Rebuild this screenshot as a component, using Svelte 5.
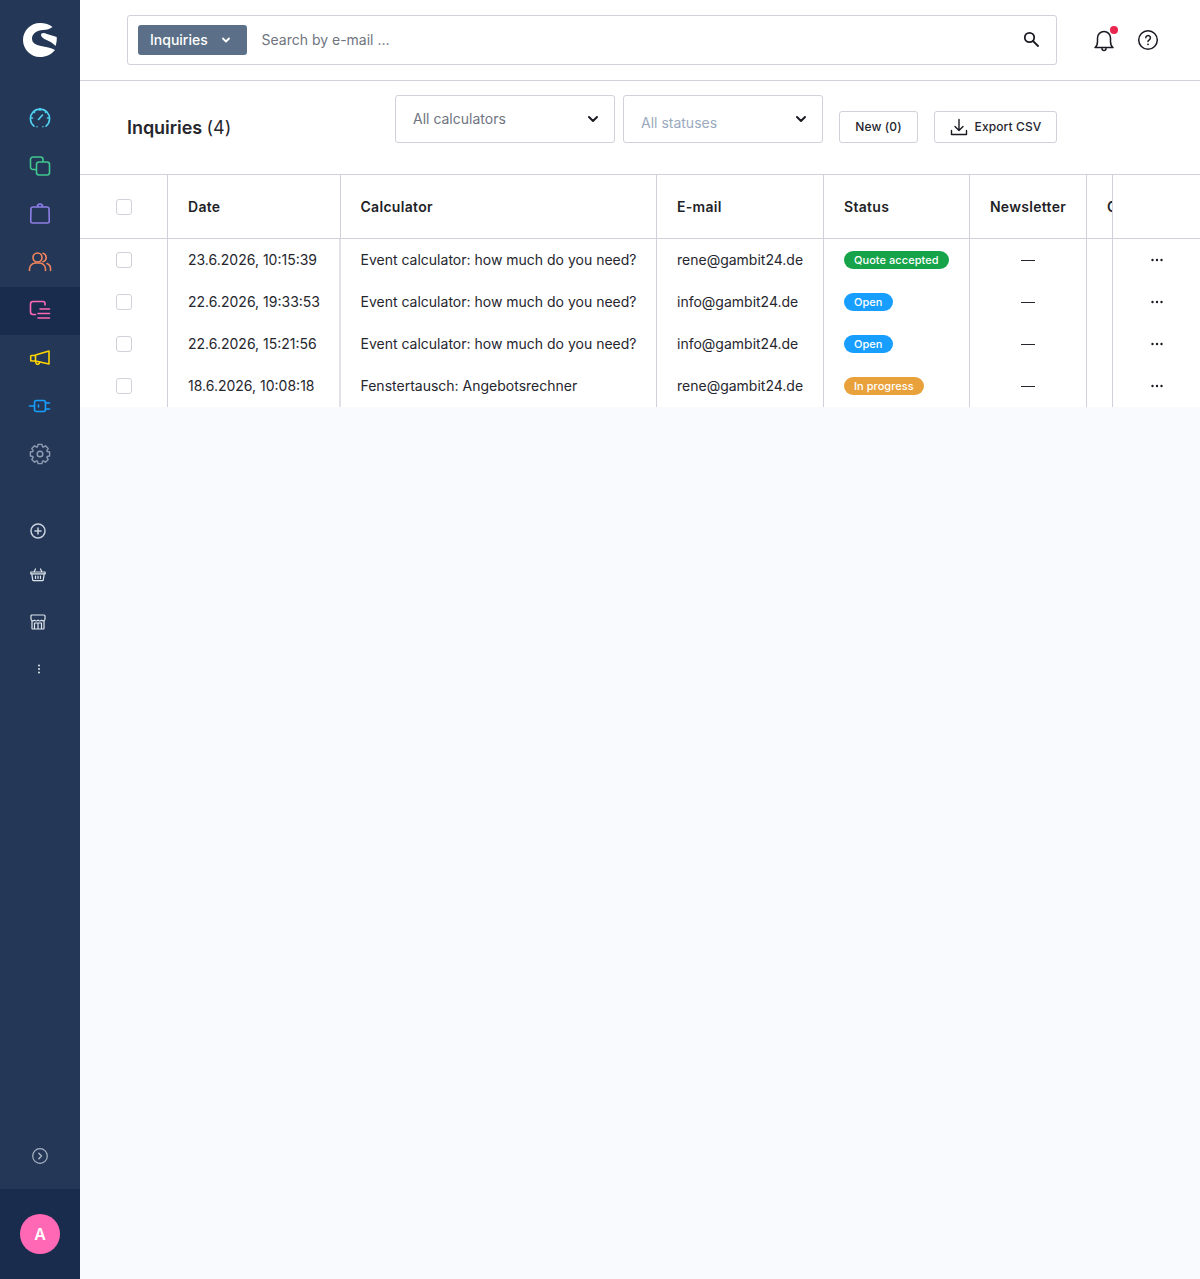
<script lang="ts">
	interface Row {
		date: string
		calculator: string
		email: string
		status: string
		tone: string
	}

	const rows: Array<Row> = [
		{ date: '23.6.2026, 10:15:39', calculator: 'Event calculator: how much do you need?', email: 'rene@gambit24.de', status: 'Quote accepted', tone: 'green' },
		{ date: '22.6.2026, 19:33:53', calculator: 'Event calculator: how much do you need?', email: 'info@gambit24.de', status: 'Open', tone: 'blue' },
		{ date: '22.6.2026, 15:21:56', calculator: 'Event calculator: how much do you need?', email: 'info@gambit24.de', status: 'Open', tone: 'blue' },
		{ date: '18.6.2026, 10:08:18', calculator: 'Fenstertausch: Angebotsrechner', email: 'rene@gambit24.de', status: 'In progress', tone: 'orange' }
	]

	// Eight toothed gear outline for the settings icon
	const gearPath: string = Array(8)
		.fill(0)
		.map((value: number, index: number) => {
			const step: number = Math.PI / 4
			const base: number = index * step - Math.PI / 2
			const point = (radius: number, angle: number): string =>
				`${(12 + radius * Math.cos(angle)).toFixed(2)} ${(12 + radius * Math.sin(angle)).toFixed(2)}`
			return `${index === 0 ? 'M' : 'L'}${point(9.8, base - 0.2)}L${point(9.8, base + 0.2)}L${point(7.6, base + 0.34)}L${point(7.6, base + step - 0.34)}`
		})
		.join('') + 'Z'
</script>

<div class="page">
	<aside class="sidebar">
		<div class="logo">
			<svg width="34" height="34" viewBox="0 0 34 34">
				<path fill="#fff" d="M29.500 4C26.500 1.500 22 0 17 0 7.600 0 0 7.600 0 17s7.600 17 17 17c6 0 11.500-2.500 15-7-4-2.500-9-3-14-4-5.500-1.200-9-3-9-7.500C9 10.500 14 7.500 20 7c4-.3 7-1 9.500-3Z" />
				<path fill="#fff" d="M18.500 10.500c1.500-1 3.500-.5 5.500.5 3 1.200 7 2 9.700 3 .300 3 -.200 6 -1.200 9-3-3.500-6.500-5-10-6.500-3-1.300-5.500-4-4-6Z" />
			</svg>
		</div>
		<nav class="nav">
			<div class="item">
				<svg width="24" height="24" viewBox="0 0 24 24" fill="none" stroke="#4fd0ee" stroke-width="1.600" stroke-linecap="round"><path d="M6 20.200A9.600 9.600 0 1 1 18 20.200" /><path d="M9 20.800h.01M15 20.800h.01M12 2.500v1.800M2.700 12h1.800M19.500 12h1.800M5.500 5.500l1 1M18.500 5.500l-1 1" /><path d="M10.500 13.500l4-4.500" /></svg>
			</div>
			<div class="item">
				<svg width="24" height="24" viewBox="0 0 24 24" fill="none" stroke="#40c88e" stroke-width="1.600"><rect x="8.500" y="8" width="13" height="13" rx="2.500" /><path d="M8.500 15.500H5A2.500 2.500 0 0 1 2.500 13V5.500A2.500 2.500 0 0 1 5 3h7.500A2.500 2.500 0 0 1 15 5.500V8" /></svg>
			</div>
			<div class="item">
				<svg width="24" height="24" viewBox="0 0 24 24" fill="none" stroke="#8e7fe6" stroke-width="1.600"><path d="M4.800 5h14.400a1.800 1.800 0 0 1 1.800 1.800L21.300 19a2 2 0 0 1-2 2H4.700a2 2 0 0 1-2-2L3 6.800A1.800 1.800 0 0 1 4.800 5Z" /><path d="M9.500 5V4.500a2.500 2.500 0 0 1 5 0V5" /></svg>
			</div>
			<div class="item">
				<svg width="24" height="24" viewBox="0 0 24 24" fill="none" stroke="#f0845c" stroke-width="1.600" stroke-linecap="round"><circle cx="9.500" cy="7.500" r="4.500" /><path d="M1.500 20.500v-1.500a6 6 0 0 1 6-6h4a6 6 0 0 1 6 6v1.500" /><path d="M15 3.200a4.500 4.500 0 0 1 0 8.600M19 13.500a5.500 5.500 0 0 1 3.500 5v2" /></svg>
			</div>
			<div class="item active">
				<svg width="24" height="24" viewBox="0 0 24 24" fill="none" stroke="#ff68b4" stroke-width="1.600" stroke-linecap="round"><path d="M15 3.500H5A2.500 2.500 0 0 0 2.500 6v8A2.500 2.500 0 0 0 5 16.500h2.500M15 3.500a2 2 0 0 1 2 2V7" /><path d="M12 11h9.500M10 15.500h11.500M10 20h11.500" /></svg>
			</div>
			<div class="item">
				<svg width="24" height="24" viewBox="0 0 24 24" fill="none" stroke="#ffd500" stroke-width="1.600" stroke-linejoin="round"><path d="M21 5v13L7.500 15V9L21 5Z" /><path d="M7.500 9.500H3.500a.800.800 0 0 0-.8.800v3.900a.800.800 0 0 0 .8.800h4" /><path d="M7.500 15l.5 2a1.800 1.800 0 0 0 3.500-.800l-.1-.4" /></svg>
			</div>
			<div class="item">
				<svg width="24" height="24" viewBox="0 0 24 24" fill="none" stroke="#189eff" stroke-width="1.600" stroke-linecap="round"><rect x="6.500" y="6.500" width="11" height="11" rx="2" /><path d="M1.500 12h5M17.500 9h4M17.500 15h4M10.500 11v2" /></svg>
			</div>
			<div class="item">
				<svg width="24" height="24" viewBox="0 0 24 24" fill="none" stroke="#8d9cb2" stroke-width="1.400" stroke-linejoin="round"><circle cx="12" cy="12" r="2.800" /><path d={gearPath} /></svg>
			</div>
		</nav>
		<div class="shortcuts">
			<div class="shortcut plus">
				<svg width="16" height="16" viewBox="0 0 16 16" fill="none" stroke="#c9d2de" stroke-width="1.500" stroke-linecap="round"><circle cx="8" cy="8" r="7" /><path d="M8 5v6M5 8h6" /></svg>
			</div>
			<div class="shortcut basket">
				<svg width="16" height="16" viewBox="0 0 16 16" fill="none" stroke="#dfe5ec" stroke-width="1.200" stroke-linecap="round" stroke-linejoin="round"><path d="M.8 5h14.400v1.800H.8zM1.800 6.800l.9 6a1 1 0 0 0 1 .8h8.600a1 1 0 0 0 1-.8l.9-6M4 5l1.500-3M12 5l-1.500-3M5.500 9v2.500M8 9v2.500M10.500 9v2.500" /></svg>
			</div>
			<div class="shortcut store">
				<svg width="16" height="16" viewBox="0 0 16 16" fill="none" stroke="#dfe5ec" stroke-width="1.200" stroke-linejoin="round"><path d="M2 1h12a1 1 0 0 1 1 1v3a2 2 0 0 1-3.500 1.200A2.300 2.300 0 0 1 8 6.200a2.300 2.300 0 0 1-3.500 0A2 2 0 0 1 1 5V2a1 1 0 0 1 1-1Z" /><path d="M2 7v7.500a.500.500 0 0 0 .5.500h11a.500.500 0 0 0 .5-.500V7M4.500 15V9h7v6M8 9v6" /></svg>
			</div>
			<div class="shortcut more">
				<svg width="16" height="16" viewBox="0 0 16 16" fill="#dfe5ec"><circle cx="9" cy="4.500" r="1" /><circle cx="9" cy="8" r="1" /><circle cx="9" cy="11.500" r="1" /></svg>
			</div>
		</div>
		<div class="collapse">
			<svg width="16" height="16" viewBox="0 0 16 16" fill="none" stroke="#a9b5c5" stroke-width="1.200" stroke-linecap="round" stroke-linejoin="round"><circle cx="8" cy="8" r="7.300" /><path d="M6.800 5.300 9.500 8l-2.700 2.700" stroke-width="1.500" /></svg>
		</div>
		<div class="account">
			<div class="avatar">A</div>
		</div>
	</aside>

	<main class="main">
		<header class="topbar">
			<div class="search">
				<button class="type">
					<span>Inquiries</span>
					<svg width="10" height="10" viewBox="0 0 10 10" fill="none" stroke="#fff" stroke-width="1.800" stroke-linecap="round" stroke-linejoin="round"><path d="M2 3.500 5 6.500 8 3.500" /></svg>
				</button>
				<span class="placeholder">Search by e-mail ...</span>
				<svg class="lens" width="16" height="16" viewBox="0 0 16 16" fill="none" stroke="#1a1a22" stroke-width="1.800" stroke-linecap="round"><circle cx="6.500" cy="6.500" r="4.700" /><path d="M10 10l5 5" /></svg>
			</div>
			<div class="actions">
				<div class="bell">
					<svg width="24" height="24" viewBox="0 0 24 24" fill="none" stroke="#1a1a22" stroke-width="1.500" stroke-linecap="round" stroke-linejoin="round"><path d="M3 19.500c1.800-1.300 2.500-3 2.500-6V10a6.500 6.500 0 0 1 13 0v3.500c0 3 .7 4.700 2.500 6H3Z" /><path d="M10 20.500a2 2 0 0 0 4 0" /></svg>
					<span class="dot"></span>
				</div>
				<svg width="22" height="22" viewBox="0 0 22 22" fill="none" stroke="#1a1a22" stroke-width="1.500" stroke-linecap="round"><circle cx="11" cy="11" r="9.300" /><path d="M8.800 8.800a2.300 2.300 0 1 1 3.500 2c-.8.500-1.300.9-1.300 1.700" /><path d="M11 15.300h.01" stroke-width="1.800" /></svg>
			</div>
		</header>

		<section class="filters">
			<h1>Inquiries <span>(4)</span></h1>
			<div class="select">
				<span class="value">All calculators</span>
				<svg width="12" height="12" viewBox="0 0 12 12" fill="none" stroke="#1a1a22" stroke-width="2" stroke-linecap="round" stroke-linejoin="round"><path d="M2 4l4 4 4-4" /></svg>
			</div>
			<div class="select status">
				<span class="value">All statuses</span>
				<svg width="12" height="12" viewBox="0 0 12 12" fill="none" stroke="#1a1a22" stroke-width="2" stroke-linecap="round" stroke-linejoin="round"><path d="M2 4l4 4 4-4" /></svg>
			</div>
			<button class="btn new">New (0)</button>
			<button class="btn export">
				<svg width="18" height="18" viewBox="0 0 18 18" fill="none" stroke="#1a1a22" stroke-width="1.400" stroke-linecap="round" stroke-linejoin="round"><path d="M9 1.500V12M5 8.500 9 12.500l4-4M1.500 12.500v4h15v-4" /></svg>
				Export CSV
			</button>
		</section>

		<div class="grid">
			<div class="head check"><span class="box"></span></div>
			<div class="head">Date</div>
			<div class="head wide">Calculator</div>
			<div class="head">E-mail</div>
			<div class="head">Status</div>
			<div class="head center">Newsletter</div>
			<div class="head clip">Consent</div>
			<div class="head last"></div>

			{#each rows as row}
				<div class="cell check"><span class="box"></span></div>
				<div class="cell text date">{row.date}</div>
				<div class="cell text wide">{row.calculator}</div>
				<div class="cell text">{row.email}</div>
				<div class="cell"><span class="badge {row.tone}">{row.status}</span></div>
				<div class="cell center"><span class="dash"></span></div>
				<div class="cell clip"></div>
				<div class="cell center end">
					<svg width="14" height="4" viewBox="0 0 14 4" fill="#1a1a22"><circle cx="2.500" cy="2" r="1.200" /><circle cx="7" cy="2" r="1.200" /><circle cx="11.500" cy="2" r="1.200" /></svg>
				</div>
			{/each}
		</div>
	</main>
</div>

<style>
	:global(body) {
		margin: 0;
		font-family: Inter, 'Noto Sans', sans-serif;
		color: #1a1a22;
		background: #f9fafd;
	}

	.page {
		display: flex;
		height: 1279px;
		overflow: hidden;
	}

	.sidebar {
		width: 80px;
		flex: none;
		display: flex;
		flex-direction: column;
		background: #243757;
	}

	.logo {
		height: 80px;
		flex: none;
		display: flex;
		align-items: center;
		justify-content: center;
		box-sizing: border-box;
	}

	.nav {
		padding-top: 14px;
		display: flex;
		flex-direction: column;
	}

	.item {
		height: 48px;
		display: flex;
		align-items: center;
		justify-content: center;
	}

	.active {
		background: #1a2c4e;
		margin: 1px 0 -1px;
		padding-bottom: 2px;
		box-sizing: border-box;
	}

	.shortcuts {
		margin-top: 29px;
		display: flex;
		flex-direction: column;
	}

	.shortcut {
		display: flex;
		align-items: center;
		padding-left: 30px;
	}

	.plus {
		height: 47px;
	}

	.basket {
		height: 41px;
	}

	.store {
		height: 53px;
	}

	.more {
		height: 41px;
	}

	.collapse {
		margin-top: auto;
		height: 66px;
		display: flex;
		align-items: center;
		justify-content: center;
	}

	.account {
		height: 90px;
		flex: none;
		background: #1a2c4e;
		display: flex;
		align-items: center;
		justify-content: center;
	}

	.avatar {
		width: 40px;
		height: 40px;
		border-radius: 50%;
		background: #ff68b4;
		color: #fff;
		font-size: 16px;
		font-weight: 600;
		display: flex;
		align-items: center;
		justify-content: center;
	}

	.main {
		flex: 1;
		min-width: 0;
	}

	.topbar {
		height: 81px;
		box-sizing: border-box;
		background: #fff;
		border-bottom: 1px solid #d1d1d9;
		display: flex;
		align-items: center;
		padding: 0 0 1px 47px;
	}

	.search {
		width: 930px;
		height: 50px;
		box-sizing: border-box;
		border: 1px solid #d1d1d9;
		border-radius: 3px;
		display: flex;
		align-items: center;
		padding: 0 17px 0 10px;
	}

	.type {
		width: 108.5px;
		height: 30px;
		padding: 0 16px 0 12px;
		border: 0;
		border-radius: 3px;
		background: #5b7088;
		color: #fff;
		font: 500 14px Inter, sans-serif;
		display: flex;
		align-items: center;
		justify-content: space-between;
	}

	.placeholder {
		margin-left: 15px;
		font-size: 14px;
		color: #6f7480;
	}

	.lens {
		margin-left: auto;
		margin-bottom: 2px;
	}

	.actions {
		display: flex;
		align-items: center;
		gap: 21px;
		margin-left: 35px;
	}

	.bell {
		position: relative;
		width: 24px;
		height: 24px;
	}

	.dot {
		position: absolute;
		top: -2px;
		right: -2px;
		width: 8px;
		height: 8px;
		border-radius: 50%;
		background: #e8264f;
	}

	.filters {
		height: 93px;
		box-sizing: border-box;
		background: #fff;
		display: flex;
		padding-left: 47px;
	}

	h1 {
		width: 268px;
		margin: 0;
		font-size: 18px;
		font-weight: 600;
		color: #26262e;
		line-height: 22px;
		padding-top: 36px;
		box-sizing: border-box;
		letter-spacing: -0.05px;
	}

	h1 span {
		font-weight: 400;
	}

	.select {
		width: 220px;
		height: 48px;
		margin-top: 14px;
		box-sizing: border-box;
		border: 1px solid #d1d1d9;
		border-radius: 3px;
		display: flex;
		align-items: center;
		justify-content: space-between;
		padding: 0 15px 0 17px;
		font-size: 14px;
		color: #6f7480;
	}

	.select .value {
		margin-bottom: 2px;
	}

	.select.status {
		width: 200px;
		margin-left: 8px;
		color: #9aa9be;
	}

	.select.status .value {
		margin-bottom: 0;
		padding-top: 6px;
	}

	.btn {
		height: 32px;
		margin-top: 30px;
		box-sizing: border-box;
		border: 1px solid #d1d1d9;
		border-radius: 3px;
		background: #fff;
		color: #26262e;
		font: 500 12px Inter, sans-serif;
		letter-spacing: 0.1px;
		padding: 0 0 1px;
		display: flex;
		align-items: center;
		justify-content: center;
	}

	.new {
		width: 79px;
		margin-left: 16px;
	}

	.export {
		width: 123px;
		margin-left: 16px;
		gap: 7px;
	}

	.grid {
		display: grid;
		grid-template-columns: 88px 173px 316px 167px 146px 117px 26px 87px;
		grid-template-rows: 64px repeat(4, 42px);
		background: #fff;
		border-top: 1px solid #d1d1d9;
	}

	.head,
	.cell {
		display: flex;
		align-items: center;
		padding: 0 20px;
		box-sizing: border-box;
		border-right: 1px solid #d1d1d9;
		white-space: nowrap;
		overflow: hidden;
		min-width: 0;
	}

	.head {
		font-size: 14px;
		font-weight: 600;
		border-bottom: 1px solid #d1d1d9;
		color: #1f1f27;
		letter-spacing: 0.3px;
	}

	.cell {
		font-size: 14px;
		color: #26262e;
	}

	.text {
		padding-bottom: 2px;
	}

	.date {
		border-right: 2px solid #e2e2e6;
	}

	.wide {
		padding-left: 19.5px;
	}

	.clip {
		padding-right: 0;
	}

	.last,
	.end {
		border-right: 0;
	}

	.check {
		justify-content: center;
		padding: 0;
	}

	.center {
		justify-content: center;
		padding-left: 0;
		padding-right: 0;
	}

	.box {
		width: 16px;
		height: 16px;
		box-sizing: border-box;
		border: 1px solid #d1d1d9;
		border-radius: 3px;
		background: #fff;
	}

	.badge {
		height: 18px;
		padding: 0 10px;
		border-radius: 9px;
		color: #fff;
		font-size: 11px;
		font-weight: 500;
		letter-spacing: 0.05px;
		line-height: 18px;
	}

	.green {
		background: #16a34a;
	}

	.blue {
		background: #189eff;
	}

	.orange {
		background: #e9a23b;
	}

	.dash {
		width: 14px;
		height: 1px;
		background: #26262e;
	}
</style>
